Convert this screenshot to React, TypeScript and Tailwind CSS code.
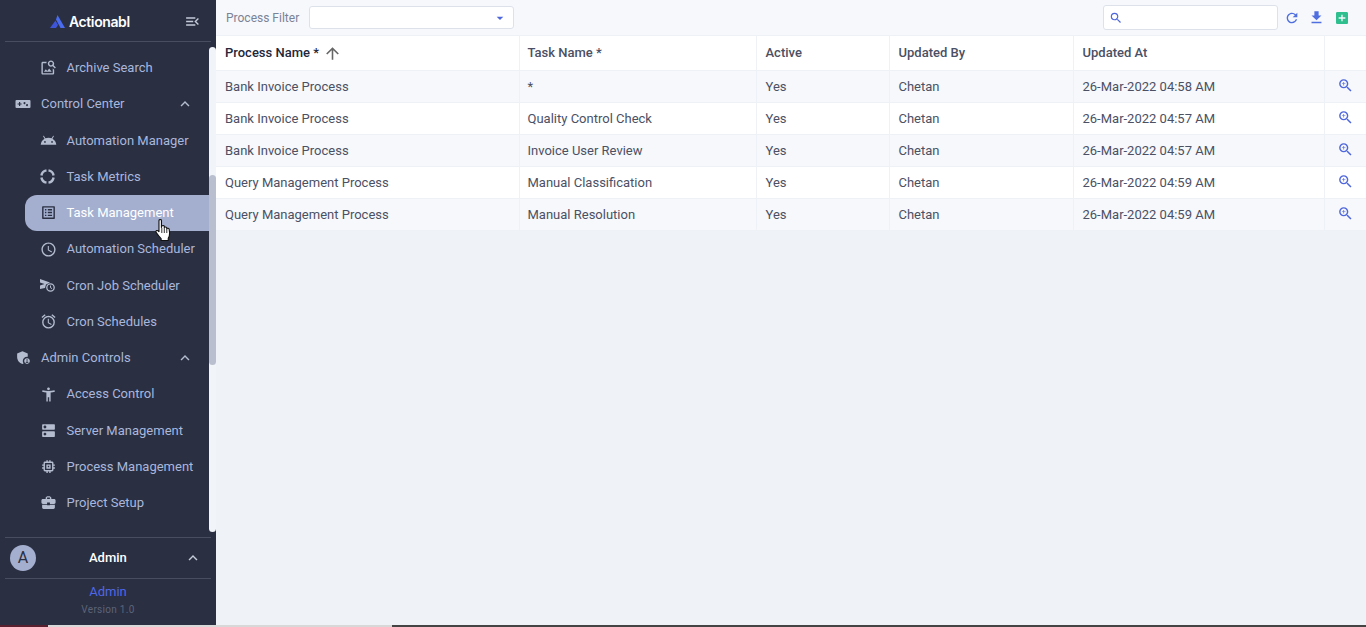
import type { ReactNode } from 'react'
import {
  MdOutlineImageSearch,
  MdAndroid,
  MdOutlineListAlt,
  MdOutlineSchedule,
  MdOutlineAlarm,
  MdAdminPanelSettings,
  MdOutlineAccessibilityNew,
  MdDns,
  MdOutlineMemory,
  MdBusinessCenter,
  MdMenuOpen,
  MdExpandLess,
  MdArrowDropDown,
  MdSearch,
  MdRefresh,
  MdFileDownload,
  MdAddBox,
  MdZoomIn,
  MdArrowUpward,
} from 'react-icons/md'

const GamepadIcon = () => (
  <svg width="16" height="16" viewBox="0 0 16 16" fill="currentColor">
    <path
      fillRule="evenodd"
      d="M1.5 4h13a1 1 0 0 1 1 1v6a1 1 0 0 1-1 1h-13a1 1 0 0 1-1-1V5a1 1 0 0 1 1-1ZM4 6v1.4H2.6v1.2H4V10h1.2V8.600h1.400V7.400H5.200V6H4Zm6.500 1a1 1 0 1 0 0 .1V7Zm2.500 2a1 1 0 1 0 0 .1V9Z"
    />
  </svg>
)

const RingIcon = () => (
  <svg width="15" height="15" viewBox="0 0 15 15" fill="none" stroke="currentColor" strokeWidth="2.400">
    <path d="M6.500 1.400A6.200 6.200 0 0 0 1.400 6.500" />
    <path d="M8.500 1.400A6.200 6.200 0 0 1 13.600 6.500" />
    <path d="M13.600 8.500A6.200 6.200 0 0 1 8.500 13.600" />
    <path d="M6.500 13.600A6.200 6.200 0 0 1 1.400 8.500" />
  </svg>
)

const CronJobIcon = () => (
  <svg width="15" height="13" viewBox="0 0 15 13" fill="none">
    <path d="M0 0 10 3.500 6 5.500 5 9 0 10V6.500L4.500 5 0 3.500Z" fill="currentColor" />
    <circle cx="10.500" cy="8.500" r="3.700" stroke="currentColor" strokeWidth="1.300" fill="#2a2f42" />
    <path d="M10.500 6.500v2.200l1.500.9" stroke="currentColor" strokeWidth="1" />
  </svg>
)

const Logo = () => (
  <svg width="15" height="13" viewBox="0 0 15 13">
    <path d="M7.500 0 15 13h-4.500L6 4.600Z" fill="#4a6cf0" />
    <path d="M5.500 5.500 8 10 6 13H0Z" fill="#3f55d8" />
  </svg>
)

const HandCursor = () => (
  <svg width="17" height="23" viewBox="0 0 15 23" preserveAspectRatio="none">
    <path
      d="M3.500 1.500c0-1.300 2.200-1.300 2.200 0v7l.3-1.500c.6-.8 2-.7 2.200.3v1.200c.4-.9 2-.8 2.200.3v1c.5-.8 2-.6 2.100.5l.4 3.700c.1 2-.3 3.500-1.200 5.200v2.300H5.400v-2c-1.300-1.200-2.500-3-4.300-6-.6-1-.3-1.700.3-2 .7-.3 1.300.1 2.100 1.200Z"
      fill="#fff"
      stroke="#111"
      strokeWidth="1"
      strokeLinejoin="round"
    />
    <path d="M6 9v5M8.200 9v5M10.400 10v4" stroke="#111" strokeWidth=".8" fill="none" />
  </svg>
)

const NavItem = ({ icon, label, active }: { icon: ReactNode; label: string; active?: boolean }) => (
  <div
    className={`relative ml-[25px] flex h-[36.25px] items-center pl-[13.5px] ${
      active ? 'rounded-l-[12px] bg-[#a4afcf] text-white' : 'text-[#a9b7dc]'
    }`}
  >
    <span className={`flex w-[28px] shrink-0 items-center pl-[1px] text-[17px] ${active ? 'text-[#2a2f42]' : 'text-[#b4bccf]'}`}>
      {icon}
    </span>
    <span className="text-[13px] whitespace-nowrap">{label}</span>
    {active && (
      <span className="absolute top-[24px] left-[130px]">
        <HandCursor />
      </span>
    )}
  </div>
)

const NavGroup = ({ icon, label }: { icon: ReactNode; label: string }) => (
  <div className="flex h-[36.25px] items-center pl-[15px] text-[#a9b7dc]">
    <span className="flex w-[26px] shrink-0 items-center text-[#b4bccf]">{icon}</span>
    <span className="text-[13px]">{label}</span>
    <MdExpandLess className="ml-auto mr-[15px] text-[18px] text-[#b4bccf]" />
  </div>
)

const rows = [
  ['Bank Invoice Process', '*', 'Yes', 'Chetan', '26-Mar-2022 04:58 AM'],
  ['Bank Invoice Process', 'Quality Control Check', 'Yes', 'Chetan', '26-Mar-2022 04:57 AM'],
  ['Bank Invoice Process', 'Invoice User Review', 'Yes', 'Chetan', '26-Mar-2022 04:57 AM'],
  ['Query Management Process', 'Manual Classification', 'Yes', 'Chetan', '26-Mar-2022 04:59 AM'],
  ['Query Management Process', 'Manual Resolution', 'Yes', 'Chetan', '26-Mar-2022 04:59 AM'],
]

const Sidebar = () => (
  <aside className="flex w-[216px] shrink-0 flex-col bg-[#2a2f42]">
    <div className="mx-[5px] flex h-[42px] shrink-0 items-center border-b border-[#484d60] pt-[1px] pl-[45px]">
      <Logo />
      <span className="ml-[4px] font-['Inter',sans-serif] text-[14px] font-semibold tracking-[-0.4px] text-white">
        Actionabl
      </span>
      <MdMenuOpen className="ml-auto mr-[10px] text-[17px] text-[#c4cad8]" />
    </div>

    <div className="flex min-h-0 flex-1">
      <nav className="min-w-0 flex-1 overflow-hidden pt-[7.8px]">
        <NavItem icon={<MdOutlineImageSearch />} label="Archive Search" />
        <NavGroup icon={<GamepadIcon />} label="Control Center" />
        <NavItem icon={<MdAndroid />} label="Automation Manager" />
        <NavItem icon={<RingIcon />} label="Task Metrics" />
        <NavItem icon={<MdOutlineListAlt />} label="Task Management" active />
        <NavItem icon={<MdOutlineSchedule />} label="Automation Scheduler" />
        <NavItem icon={<CronJobIcon />} label="Cron Job Scheduler" />
        <NavItem icon={<MdOutlineAlarm />} label="Cron Schedules" />
        <NavGroup icon={<MdAdminPanelSettings className="text-[17px]" />} label="Admin Controls" />
        <NavItem icon={<MdOutlineAccessibilityNew />} label="Access Control" />
        <NavItem icon={<MdDns />} label="Server Management" />
        <NavItem icon={<MdOutlineMemory />} label="Process Management" />
        <NavItem icon={<MdBusinessCenter />} label="Project Setup" />
      </nav>
      <div className="mt-[5px] mb-[5px] w-[7px] shrink-0 rounded-t-[4px] rounded-b-[4px] bg-[#f1f4f9] pt-[128px]">
        <div className="h-[190px] rounded-[4px] bg-[#b9bfce]" />
      </div>
    </div>

    <div className="mx-[5px] flex h-[42px] shrink-0 items-center border-t border-b border-[#484d60] pl-[5px]">
      <div className="flex h-[26px] w-[26px] items-center justify-center rounded-full bg-[#a4afcf] text-[16px] text-[#2a2f42]">
        A
      </div>
      <span className="ml-[53px] text-[13px] font-medium text-white">Admin</span>
      <MdExpandLess className="ml-auto mr-[9px] text-[18px] text-[#c4cad8]" />
    </div>
    <div className="flex h-[46px] shrink-0 flex-col items-center">
      <span className="mt-[4px] text-[13px] leading-[17px] text-[#4f68e8]">Admin</span>
      <span className="mt-[2px] text-[10px] leading-[15px] tracking-[0.3px] text-[#5d6478]">Version 1.0</span>
    </div>
  </aside>
)

const Toolbar = () => (
  <div className="flex h-[35px] items-center bg-[#f6f8fb] pl-[10px]">
    <span className="text-[12px] text-[#7b8296]">Process Filter</span>
    <div className="ml-[10px] flex h-[23px] w-[205px] items-center justify-end rounded-[3px] border border-[#dde1ea] bg-white pr-[5px]">
      <MdArrowDropDown className="text-[16px] text-[#4f67dc]" />
    </div>
    <div className="ml-auto flex h-[25px] w-[175px] items-center rounded-[3px] border border-[#dde1ea] bg-white pl-[5px]">
      <MdSearch className="text-[14px] text-[#4f67dc]" />
    </div>
    <div className="mr-[12px] ml-[1px] flex items-center">
      <span className="flex w-[25px] justify-center">
        <MdRefresh className="text-[16px] text-[#4f6fe0]" />
      </span>
      <span className="flex w-[25px] justify-center">
        <MdFileDownload className="text-[17px] text-[#4f6fe0]" />
      </span>
      <span className="flex w-[25px] justify-center">
        <MdAddBox className="text-[16px] text-[#2fbf8f]" />
      </span>
    </div>
  </div>
)

const TaskTable = () => (
  <table className="w-full table-fixed border-collapse text-[13px] text-[#4b5064]">
    <colgroup>
      <col className="w-[303px]" />
      <col className="w-[237px]" />
      <col className="w-[133px]" />
      <col className="w-[184px]" />
      <col className="w-[251px]" />
      <col />
    </colgroup>
    <thead>
      <tr className="h-[35px] bg-white text-left font-medium">
        <th className="border-t border-b border-[#eef1f6] pl-[9px] font-medium text-[#23273a]">
          <span className="flex items-center">
            Process Name *
            <MdArrowUpward className="ml-[4px] text-[19px] text-[#666]" />
          </span>
        </th>
        <th className="border border-[#eef1f6] pl-[8px] font-medium">Task Name *</th>
        <th className="border border-[#eef1f6] pl-[9px] font-medium">Active</th>
        <th className="border border-[#eef1f6] pl-[9px] font-medium">Updated By</th>
        <th className="border border-[#eef1f6] pl-[9px] font-medium">Updated At</th>
        <th className="border-t border-b border-l border-[#eef1f6]" />
      </tr>
    </thead>
    <tbody>
      {rows.map((row, index) => (
        <tr key={index} className={`h-[32px] ${index % 2 === 0 ? 'bg-[#f6f8fb]' : 'bg-white'}`}>
          <td className="border-b border-[#eef1f6] pl-[9px]">{row[0]}</td>
          <td className="border-b border-l border-[#eef1f6] pl-[8px]">{row[1]}</td>
          <td className="border-b border-l border-[#eef1f6] pl-[9px]">{row[2]}</td>
          <td className="border-b border-l border-[#eef1f6] pl-[9px]">{row[3]}</td>
          <td className="border-b border-l border-[#eef1f6] pl-[9px]">{row[4]}</td>
          <td className="border-b border-l border-[#eef1f6] pl-[12px]">
            <MdZoomIn className="-mt-[3px] text-[17px] text-[#4f67dc]" />
          </td>
        </tr>
      ))}
    </tbody>
  </table>
)

export default function App() {
  return (
    <div className="flex h-[627px] flex-col overflow-hidden bg-[#eff2f7] font-['Roboto',sans-serif]">
      <div className="flex min-h-0 flex-1">
        <Sidebar />
        <main className="min-w-0 flex-1">
          <Toolbar />
          <TaskTable />
        </main>
      </div>
      {/* strip of the window behind, at the very bottom of the capture */}
      <div className="flex h-[2px] shrink-0">
        <div className="w-[48px] bg-[#5a2030]" />
        <div className="w-[344px] bg-[#d8d8d8]" />
        <div className="flex-1 bg-[#444444]" />
      </div>
    </div>
  )
}
